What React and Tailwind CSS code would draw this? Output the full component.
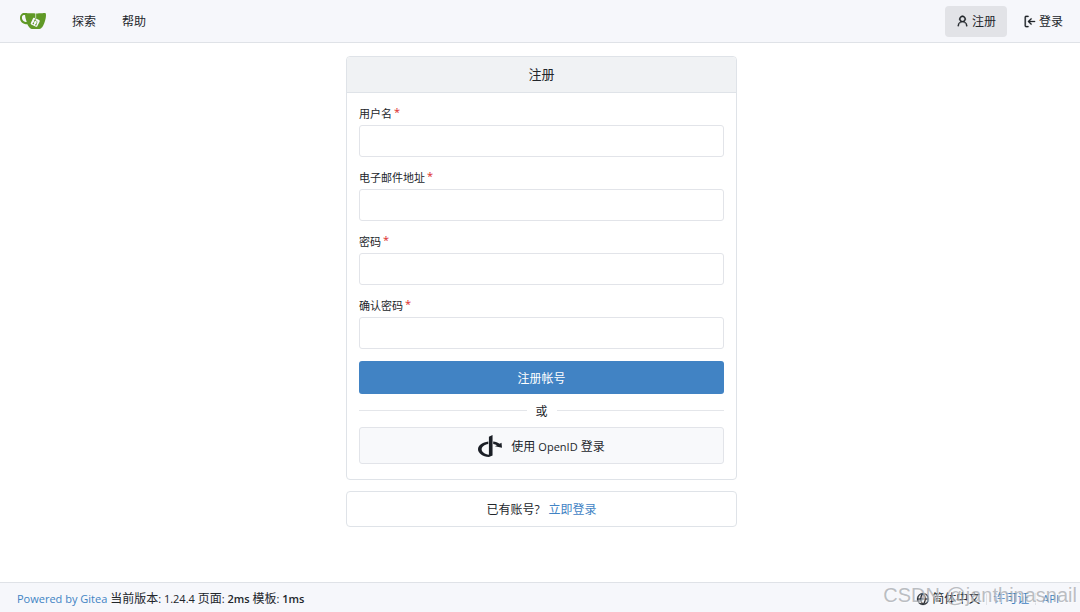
import { SiGitea, SiOpenid } from "react-icons/si";

const fields = [
  { name: "user_name", label: "用户名", type: "text" },
  { name: "email", label: "电子邮件地址", type: "email" },
  { name: "password", label: "密码", type: "password" },
  { name: "retype", label: "确认密码", type: "password" },
];

const icons = {
  person:
    "M10.561 8.073a6.005 6.005 0 0 1 3.432 5.142.75.75 0 1 1-1.498.07 4.5 4.5 0 0 0-8.99 0 .75.75 0 0 1-1.498-.07 6.004 6.004 0 0 1 3.431-5.142 3.999 3.999 0 1 1 5.123 0ZM10.5 5a2.5 2.5 0 1 0-5 0 2.5 2.5 0 0 0 5 0Z",
  signIn:
    "M2 2.75C2 1.784 2.784 1 3.75 1h2.5a.75.75 0 0 1 0 1.5h-2.5a.25.25 0 0 0-.25.25v10.5c0 .138.112.25.25.25h2.5a.75.75 0 0 1 0 1.5h-2.5A1.75 1.75 0 0 1 2 13.25Zm6.56 4.5h5.69a.75.75 0 0 1 0 1.5H8.56l1.97 1.97a.749.749 0 0 1-.326 1.275.749.749 0 0 1-.734-.215L6.22 8.53a.75.75 0 0 1 0-1.06l3.25-3.25a.749.749 0 0 1 1.275.326.749.749 0 0 1-.215.734L8.56 7.25Z",
  globe:
    "M8 0a8 8 0 1 1 0 16A8 8 0 0 1 8 0ZM5.78 8.75a9.64 9.64 0 0 0 1.363 4.177c.255.426.542.832.857 1.215.245-.296.551-.705.857-1.215A9.64 9.64 0 0 0 10.22 8.75Zm4.44-1.5a9.64 9.64 0 0 0-1.363-4.177c-.307-.51-.612-.919-.857-1.215a9.927 9.927 0 0 0-.857 1.215A9.64 9.64 0 0 0 5.78 7.25Zm-5.944 1.5H1.543a6.507 6.507 0 0 0 4.666 5.5c-.123-.181-.24-.365-.352-.552-.715-1.192-1.437-2.874-1.581-4.948Zm-2.733-1.5h2.733c.144-2.074.866-3.756 1.58-4.948.12-.197.237-.381.353-.552a6.507 6.507 0 0 0-4.666 5.5Zm10.181 1.5c-.144 2.074-.866 3.756-1.58 4.948-.12.197-.237.381-.353.552a6.507 6.507 0 0 0 4.666-5.5Zm2.733-1.5a6.507 6.507 0 0 0-4.666-5.5c.123.181.24.365.353.552.714 1.192 1.436 2.874 1.58 4.948Z",
};

const Icon = ({ name, size }) => (
  <svg
    viewBox="0 0 16 16"
    width={size}
    height={size}
    fill="currentColor"
    stroke="currentColor"
    strokeWidth="0.3"
    className="overflow-visible"
  >
    <path d={icons[name]} />
  </svg>
);

const Navbar = () => {
  return (
    <nav className="flex h-[43px] items-center justify-between border-b border-[#dfe2e7] bg-[#f6f7fb] pr-[5px] pl-5">
      <div className="flex items-center">
        <a href="#" aria-label="Gitea" className="mr-[26px]">
          <SiGitea size={26} className="text-[#609926]" />
        </a>
        <a href="#" className="mr-[26px] pt-0.5">
          探索
        </a>
        <a href="#" className="pt-0.5">
          帮助
        </a>
      </div>
      <div className="flex items-center gap-1">
        <a
          href="#"
          className="flex h-[31px] items-center gap-[3px] rounded bg-[#e2e3e7] px-[11px]"
        >
          <Icon name="person" size={13} />
          <span className="pt-0.5">注册</span>
        </a>
        <a href="#" className="flex h-[31px] items-center gap-[3px] px-3">
          <Icon name="signIn" size={13} />
          <span className="pt-0.5">登录</span>
        </a>
      </div>
    </nav>
  );
};

const SignUpForm = () => {
  return (
    <div className="rounded border border-[#dfe3e8]">
      <h4 className="rounded-t border-b border-[#dfe3e8] bg-[#f0f2f4] py-2 text-center text-[13px] leading-[19px]">
        注册
      </h4>
      <form action="" className="px-3 pt-3 pb-[15px]">
        {fields.map((field) => (
          <div key={field.name} className="mb-3">
            <label
              htmlFor={field.name}
              className="mb-[3px] flex items-start gap-0.5 pt-px text-[11px] leading-4"
            >
              {field.label}
              <span className="leading-3 text-[#db2828]">*</span>
            </label>
            <input
              id={field.name}
              name={field.name}
              type={field.type}
              required
              className="block h-8 w-full rounded-[3px] border border-[#e2e4e9] px-3"
            />
          </div>
        ))}

        <button
          type="button"
          className="h-[33px] w-full rounded-[3px] bg-[#4183c4] pt-0.5 text-white"
        >
          注册帐号
        </button>

        {/* divider */}
        <div className="flex h-[33px] items-center gap-[9px]">
          <div className="h-px flex-1 bg-[#e4e6ea]" />
          <span className="pt-0.5">或</span>
          <div className="h-px flex-1 bg-[#e4e6ea]" />
        </div>

        <a
          href="#"
          className="flex h-[37px] items-center justify-center gap-[9px] rounded-[3px] border border-[#e2e4e9] bg-[#f8f9fb]"
        >
          <SiOpenid size={24} className="text-[#1b1f26]" />
          <span className="pt-0.5">
            使用 <span className="text-[11px]">OpenID</span> 登录
          </span>
        </a>
      </form>
    </div>
  );
};

const Footer = () => {
  return (
    <footer className="relative flex h-[30px] items-center justify-between border-t border-[#dfe2e7] bg-[#f6f7fb] px-[17px] pt-[3px]">
      <div className="text-[11px]">
        <a href="#" className="text-[#4183c4]">
          Powered by Gitea
        </a>{" "}
        <span className="text-xs">当前版本</span>: 1.24.4{" "}
        <span className="text-xs">页面</span>:{" "}
        <strong className="font-semibold">2ms</strong>{" "}
        <span className="text-xs">模板</span>:{" "}
        <strong className="font-semibold">1ms</strong>
      </div>
      <div className="flex items-center pr-1">
        <button type="button" className="flex items-center gap-[3px] pr-[6px]">
          <Icon name="globe" size={12} />
          简体中文
        </button>
        <a
          href="#"
          className="border-l border-[#dfe2e7] px-[6px] leading-3 text-[#4183c4]"
        >
          许可证
        </a>
        <a
          href="#"
          className="border-l border-[#dfe2e7] pl-[6px] text-[11px] leading-3 text-[#4183c4]"
        >
          API
        </a>
      </div>
      {/* watermark */}
      <span className="pointer-events-none absolute right-[3px] bottom-[5px] font-['Liberation_Sans'] text-xl leading-6 whitespace-nowrap text-[#a0a3a8]/70 [text-shadow:1px_1px_0_rgb(255_255_255/0.5)]">
        CSDN @janthinasnail
      </span>
    </footer>
  );
};

const App = () => {
  return (
    <div className="flex min-h-screen flex-col bg-white font-['Open_Sans','Noto_Sans_CJK_SC',sans-serif] text-xs text-[#22262b]">
      <Navbar />
      <main className="flex-1 pt-[13px] pl-[3px]">
        <div className="mx-auto max-w-[391px]">
          <SignUpForm />
          <div className="mt-[11px] flex h-9 items-center justify-center gap-[9px] rounded border border-[#dfe3e8] pt-0.5">
            已有账号?
            <a href="#" className="text-[#4183c4]">
              立即登录
            </a>
          </div>
        </div>
      </main>
      <Footer />
    </div>
  );
};

export default App;
